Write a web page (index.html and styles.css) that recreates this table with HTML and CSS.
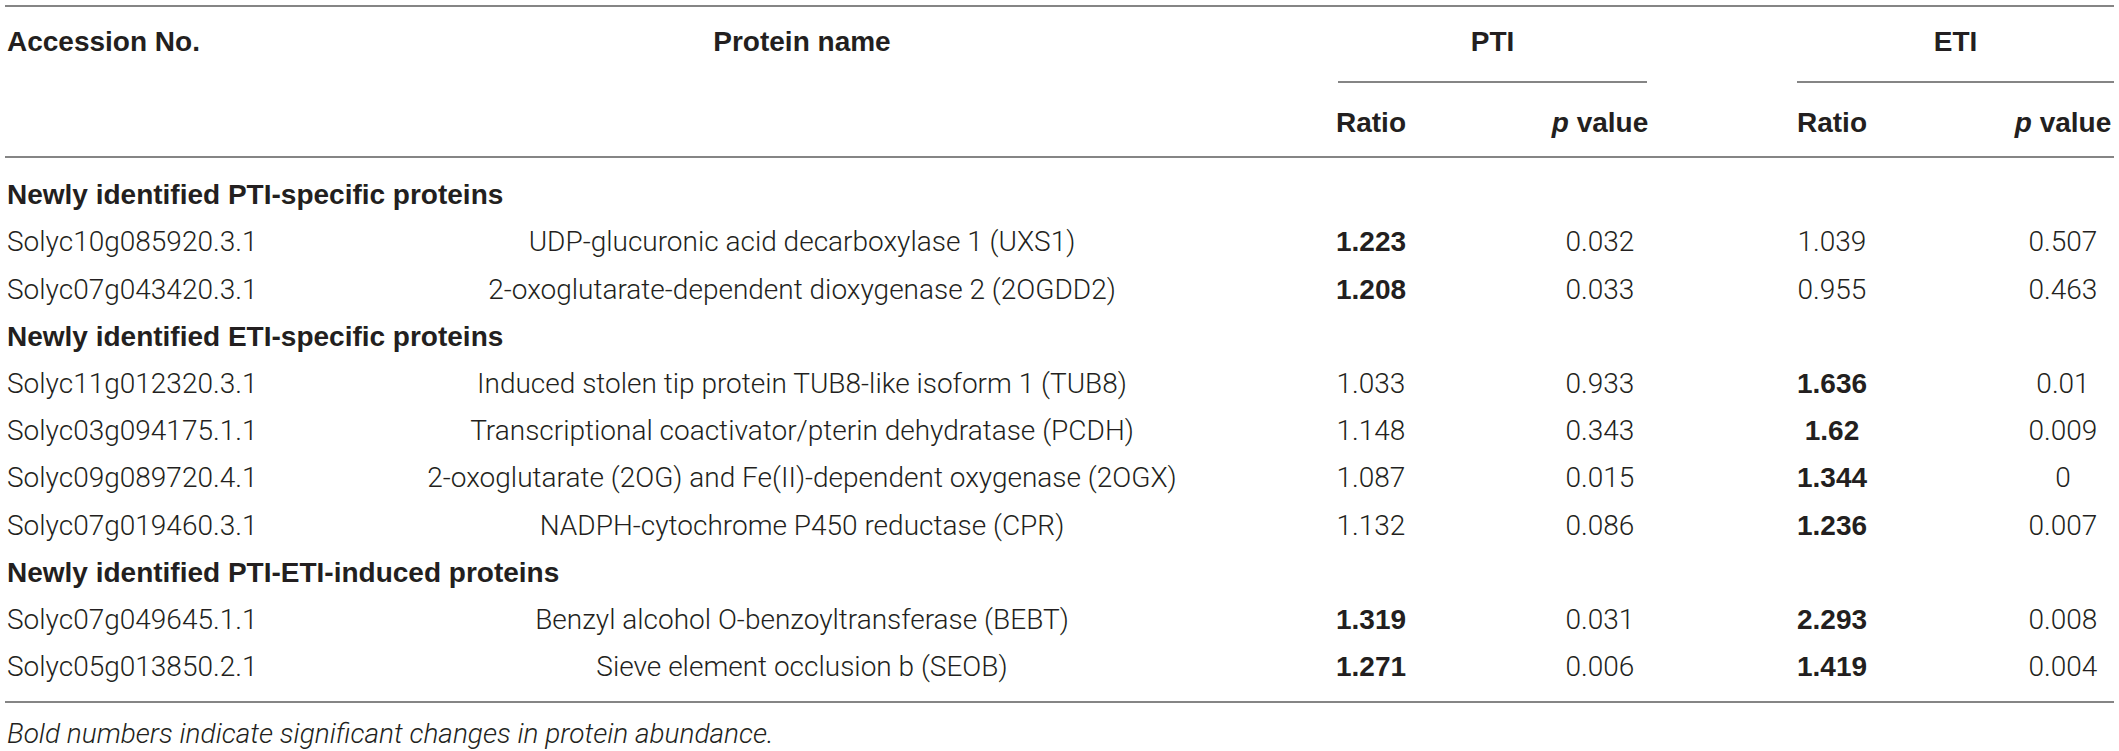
FILE: index.html
```html
<!DOCTYPE html>
<html lang="en">
<head>
<meta charset="utf-8">
<title>Newly identified proteins</title>
<link rel="stylesheet" href="styles.css">
</head>
<body>
<div class="page">
  <table class="data">
    <colgroup>
      <col class="c-acc">
      <col class="c-prot">
      <col class="c-r1">
      <col class="c-p1">
      <col class="c-r2">
      <col class="c-p2">
    </colgroup>
    <thead>
      <tr class="h1">
        <th class="acc top" rowspan="2">Accession No.</th>
        <th class="prot top" rowspan="2">Protein name</th>
        <th class="grp grp-pti top" colspan="2"><div class="grp-label">PTI</div></th>
        <th class="grp top" colspan="2"><div class="grp-label">ETI</div></th>
      </tr>
      <tr class="h2">
        <th class="num r1 sub">Ratio</th>
        <th class="num p1 sub"><i>p</i> value</th>
        <th class="num r2 sub">Ratio</th>
        <th class="num sub"><i>p</i> value</th>
      </tr>
    </thead>
    <tbody>
      <tr class="section first"><td colspan="6">Newly identified PTI-specific proteins</td></tr>
      <tr>
        <td class="acc">Solyc10g085920.3.1</td>
        <td class="prot">UDP-glucuronic acid decarboxylase 1 (UXS1)</td>
        <td class="num r1"><b>1.223</b></td>
        <td class="num p1">0.032</td>
        <td class="num r2">1.039</td>
        <td class="num">0.507</td>
      </tr>
      <tr>
        <td class="acc">Solyc07g043420.3.1</td>
        <td class="prot">2-oxoglutarate-dependent dioxygenase 2 (2OGDD2)</td>
        <td class="num r1"><b>1.208</b></td>
        <td class="num p1">0.033</td>
        <td class="num r2">0.955</td>
        <td class="num">0.463</td>
      </tr>
      <tr class="section"><td colspan="6">Newly identified ETI-specific proteins</td></tr>
      <tr>
        <td class="acc">Solyc11g012320.3.1</td>
        <td class="prot">Induced stolen tip protein TUB8-like isoform 1 (TUB8)</td>
        <td class="num r1">1.033</td>
        <td class="num p1">0.933</td>
        <td class="num r2"><b>1.636</b></td>
        <td class="num">0.01</td>
      </tr>
      <tr>
        <td class="acc">Solyc03g094175.1.1</td>
        <td class="prot">Transcriptional coactivator/pterin dehydratase (PCDH)</td>
        <td class="num r1">1.148</td>
        <td class="num p1">0.343</td>
        <td class="num r2"><b>1.62</b></td>
        <td class="num">0.009</td>
      </tr>
      <tr>
        <td class="acc">Solyc09g089720.4.1</td>
        <td class="prot">2-oxoglutarate (2OG) and Fe(II)-dependent oxygenase (2OGX)</td>
        <td class="num r1">1.087</td>
        <td class="num p1">0.015</td>
        <td class="num r2"><b>1.344</b></td>
        <td class="num">0</td>
      </tr>
      <tr>
        <td class="acc">Solyc07g019460.3.1</td>
        <td class="prot">NADPH-cytochrome P450 reductase (CPR)</td>
        <td class="num r1">1.132</td>
        <td class="num p1">0.086</td>
        <td class="num r2"><b>1.236</b></td>
        <td class="num">0.007</td>
      </tr>
      <tr class="section"><td colspan="6">Newly identified PTI-ETI-induced proteins</td></tr>
      <tr>
        <td class="acc">Solyc07g049645.1.1</td>
        <td class="prot">Benzyl alcohol O-benzoyltransferase (BEBT)</td>
        <td class="num r1"><b>1.319</b></td>
        <td class="num p1">0.031</td>
        <td class="num r2"><b>2.293</b></td>
        <td class="num">0.008</td>
      </tr>
      <tr class="last">
        <td class="acc">Solyc05g013850.2.1</td>
        <td class="prot">Sieve element occlusion b (SEOB)</td>
        <td class="num r1"><b>1.271</b></td>
        <td class="num p1">0.006</td>
        <td class="num r2"><b>1.419</b></td>
        <td class="num">0.004</td>
      </tr>
    </tbody>
  </table>
  <p class="note">Bold numbers indicate significant changes in protein abundance.</p>
</div>
</body>
</html>
```

FILE: styles.css
```css
html, body {
  margin: 0;
  padding: 0;
  background: #ffffff;
}

.page {
  padding: 5px 5px 0 5px;
  font-family: Roboto, "Liberation Sans", Arial, sans-serif;
  font-weight: 300;
  font-size: 28px;
  line-height: 32px;
  color: #231f20;
}

.data {
  width: 2109px;
  table-layout: fixed;
  border-collapse: separate;
  border-spacing: 0;
}

.c-acc  { width: 395px; }
.c-prot { width: 936px; }
.c-r1   { width: 214px; }
.c-p1   { width: 247px; }
.c-r2   { width: 215px; }
.c-p2   { width: 102px; }

th, td {
  padding: 0;
  white-space: nowrap;
  vertical-align: top;
}

th,
b,
.section td {
  font-family: "Liberation Sans", Arial, sans-serif;
  font-weight: 700;
}

th i {
  font-style: italic;
}

/* header */
.top {
  border-top: 2px solid #858585;
  padding-top: 19px;
}

.acc,
.section td {
  text-align: left;
  padding-left: 2px;
}

th.acc,
th.prot {
  border-bottom: 2px solid #858585;
}

.prot {
  text-align: center;
  padding-right: 132px;
}

.grp {
  text-align: center;
}

.grp-pti {
  padding-right: 147px;
}

.grp-label {
  padding-bottom: 23px;
  border-bottom: 2px solid #858585;
}

.grp-pti .grp-label {
  margin: 0 3px 0 2px;
}

.sub {
  padding-top: 24px;
  padding-bottom: 17px;
  border-bottom: 2px solid #858585;
}

.num {
  text-align: center;
}

.r1 { padding-right: 144px; }
.p1 { padding-right: 147px; }
.r2 { padding-right: 145px; }

/* body rows */
tbody td {
  padding-top: 7.6px;
  padding-bottom: 7.6px;
}

tbody tr.first td {
  padding-top: 21.3px;
}

tbody tr.last td {
  padding-bottom: 17.6px;
  border-bottom: 2px solid #858585;
}

.note {
  margin: 15px 0 0 2px;
  font-style: italic;
  font-weight: 300;
}
```
